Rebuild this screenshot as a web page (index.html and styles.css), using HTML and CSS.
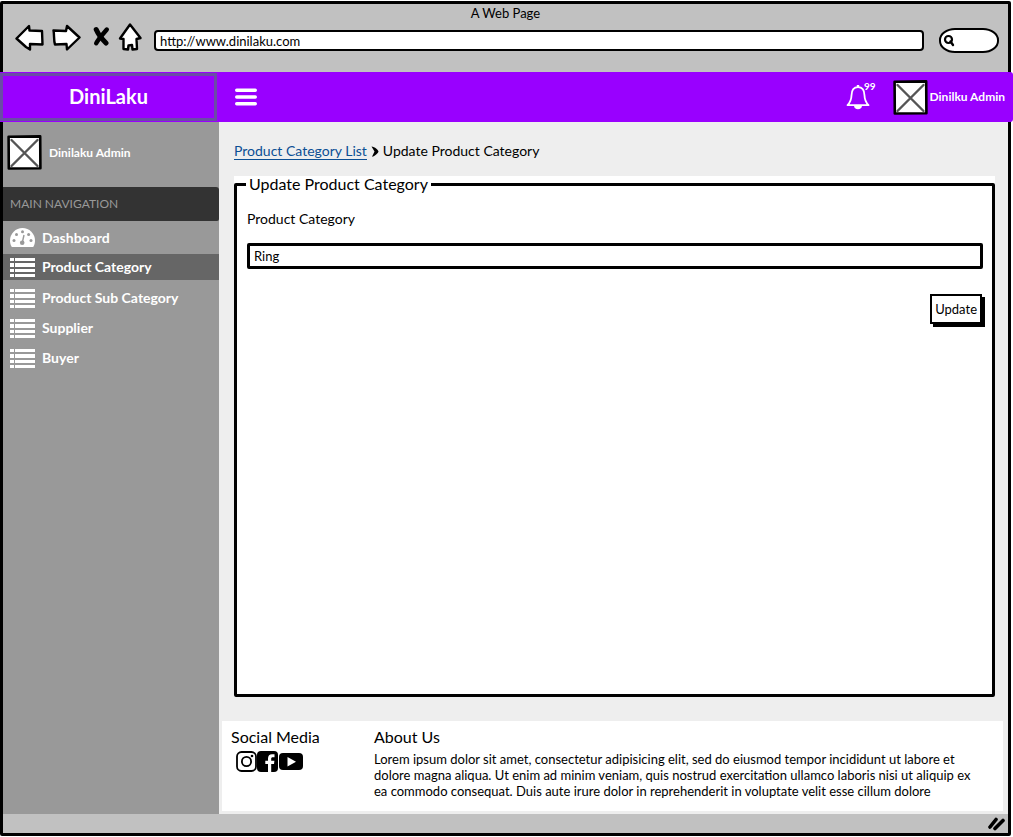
FILE: index.html
```html
<!DOCTYPE html>
<html lang="en">
<head>
<meta charset="utf-8">
<title>A Web Page</title>
<link rel="stylesheet" href="styles.css">
</head>
<body>
<svg class="sprite" aria-hidden="true">
  <symbol id="list" viewBox="0 0 25 19">
    <path fill="#fff" d="M0 0h4v3H0zM5 0h20v3H5zM0 5h4v4H0zM5 5h20v4H5zM0 11h4v3H0zM5 11h20v3H5zM0 16h4v3H0zM5 16h20v3H5z"/>
  </symbol>
  <symbol id="avatar" viewBox="0 0 35 35">
    <path fill="#fff" stroke="#000" stroke-width="2.6" stroke-linejoin="round" d="M1.6 1.8 33.2 1.4 33.4 33.2 1.8 33.5z"/>
    <path fill="none" stroke="#555" stroke-width="2.4" stroke-linecap="round" d="M4.5 5 30.5 31M30.5 5 4.5 31"/>
  </symbol>
</svg>
<div class="window">
  <div class="chrome">
    <div class="window-title">A Web Page</div>
    <div class="toolbar">
      <div class="tools">
        <button class="icon-btn" type="button" aria-label="Back"><svg width="29" height="27" viewBox="0 0 29 27"><path class="ink" d="M1.5 14.5 14 2l.5 4.5L27 7l.5 13.500-12.500-.5v5.500L11 23z"/></svg></button>
        <button class="icon-btn" type="button" aria-label="Forward"><svg width="29" height="27" viewBox="0 0 29 27"><path class="ink" d="M1.500 6.500 14 7l1-5 12.500 11.500L15 25.500 14.500 20 3 20.500C1.500 16 2.500 11 1.500 6.500z"/></svg></button>
        <button class="icon-btn stop" type="button" aria-label="Stop"><svg width="17" height="21" viewBox="0 0 17 21"><path fill="none" stroke="#000" stroke-width="5" stroke-linecap="round" d="M3.200 3.500C6 10 9 13 13 17"/><path fill="none" stroke="#000" stroke-width="4.400" stroke-linecap="round" d="M13.800 3.500C10 8 6 12 3.200 17.200"/></svg></button>
        <button class="icon-btn" type="button" aria-label="Home"><svg width="24" height="28" viewBox="0 0 24 28"><path class="ink" d="M12 1.500 22.500 15l-4 1 .5 10-4.500.5-.5-4.500-3.500.5-.5 4-4.500-.5V16l-3.500-.5z"/></svg></button>
      </div>
      <input class="address" type="text" aria-label="Address" value="http://www.dinilaku.com">
      <label class="search">
        <svg width="13" height="13" viewBox="0 0 13 13" aria-hidden="true"><circle cx="5.500" cy="5.500" r="3.500" fill="none" stroke="#000" stroke-width="2.200"/><path stroke="#000" stroke-width="2.400" stroke-linecap="round" d="M7.500 7.500 10 11"/></svg>
        <input type="search" aria-label="Search">
      </label>
    </div>
  </div>

  <header class="topbar">
    <a class="brand" href="#">DiniLaku</a>
    <button class="icon-btn menu" type="button" aria-label="Menu"><svg width="22" height="18" viewBox="0 0 22 18"><path stroke="#fff" stroke-width="3.400" stroke-linecap="round" d="M1.700 2.200h18.600M1.700 9h18.600M1.700 15.800h18.600"/></svg></button>
    <button class="icon-btn bell" type="button" aria-label="Notifications">
      <svg width="24" height="26" viewBox="0 0 24 26"><path fill="none" stroke="#fff" stroke-width="1.800" stroke-linejoin="round" d="M12 3.200C7.500 3.200 5.600 7 5.500 11.500 5.400 16 4.500 18 1.500 21.200h21C19.500 18 18.600 16 18.500 11.500 18.400 7 16.500 3.200 12 3.200z"/><path fill="#fff" d="M10.800 1h2.400v2.500h-2.400zM8 21.500h8c0 2.500-1.700 3.800-4 3.800s-4-1.300-4-3.800z"/></svg>
      <span class="badge">99</span>
    </button>
    <a class="account" href="#"><svg width="35" height="35" aria-hidden="true"><use href="#avatar"/></svg>Dinilku Admin</a>
  </header>

  <div class="body">
    <aside class="sidebar">
      <div class="profile"><svg width="35" height="35" aria-hidden="true"><use href="#avatar"/></svg>Dinilaku Admin</div>
      <h2 class="nav-title">MAIN NAVIGATION</h2>
      <nav>
        <a class="nav-link" href="#"><svg width="25" height="19" viewBox="0 0 25 19" aria-hidden="true"><path fill="#fff" d="M1.800 19C.5 17 0 15 0 12.500a12.500 12.500 0 0 1 25 0c0 2.500-.5 4.500-1.800 6.500z"/><g fill="#999"><circle cx="12.500" cy="3.800" r="1.500"/><circle cx="6.500" cy="6.500" r="1.500"/><circle cx="18.600" cy="6.500" r="1.500"/><circle cx="4" cy="12.500" r="1.500"/><circle cx="21" cy="12.500" r="1.500"/><circle cx="12.200" cy="14.800" r="2.300"/></g><path stroke="#999" stroke-width="1.400" d="M12.300 14.500 14 7"/></svg>Dashboard</a>
        <a class="nav-link active" href="#" aria-current="page"><svg width="25" height="19" aria-hidden="true"><use href="#list"/></svg>Product Category</a>
        <a class="nav-link" href="#"><svg width="25" height="19" aria-hidden="true"><use href="#list"/></svg>Product Sub Category</a>
        <a class="nav-link" href="#"><svg width="25" height="19" aria-hidden="true"><use href="#list"/></svg>Supplier</a>
        <a class="nav-link" href="#"><svg width="25" height="19" aria-hidden="true"><use href="#list"/></svg>Buyer</a>
      </nav>
    </aside>

    <div class="content">
      <main class="main">
        <nav class="breadcrumb" aria-label="Breadcrumb">
          <a href="#">Product Category List</a>
          <svg width="8" height="11" viewBox="0 0 8 11" aria-hidden="true"><path d="M.5.5C4 1 7 3.500 7.500 5.500 7 7.500 4 10 1 10.800L3.500 5.500z"/></svg>
          <span>Update Product Category</span>
        </nav>
        <form class="panel">
          <fieldset class="group">
            <legend>Update Product Category</legend>
            <label for="category">Product Category</label>
            <input class="field" id="category" type="text" value="Ring">
            <button class="update" type="button">Update</button>
          </fieldset>
        </form>
      </main>
      <footer class="footer">
        <section class="social">
          <h2>Social Media</h2>
          <div class="social-links">
            <a href="#" aria-label="Instagram"><svg width="21" height="21" viewBox="0 0 21 21"><g fill="none" stroke="#000" stroke-width="1.800"><rect x="1" y="1" width="19" height="19" rx="4.500"/><circle cx="10.500" cy="10.500" r="4.600"/></g><circle cx="16" cy="5" r="1.300"/></svg></a>
            <a href="#" aria-label="Facebook"><svg width="21" height="21" viewBox="0 0 21 21"><rect width="21" height="21" rx="4"/><path fill="#fff" d="M11 21v-8H8.300V9.800H11V7.500C11 4.800 12.500 3.300 15 3.300h2.500v3h-1.700c-1.200 0-1.600.5-1.600 1.500v2h3.200L17 13h-2.800v8z"/></svg></a>
            <a href="#" aria-label="YouTube"><svg width="25" height="21" viewBox="0 0 25 21"><rect x="1" y="2" width="24" height="17" rx="4"/><path fill="#fff" d="M9.500 6v9.500l8.500-4.700z"/></svg></a>
          </div>
        </section>
        <section class="about">
          <h2>About Us</h2>
          <p>Lorem ipsum dolor sit amet, consectetur adipisicing elit, sed do eiusmod tempor incididunt ut labore et dolore magna aliqua. Ut enim ad minim veniam, quis nostrud exercitation ullamco laboris nisi ut aliquip ex ea commodo consequat. Duis aute irure dolor in reprehenderit in voluptate velit esse cillum dolore</p>
        </section>
      </footer>
    </div>
  </div>
  <div class="statusbar"><svg width="17" height="14" viewBox="0 0 17 14" aria-hidden="true"><path fill="none" stroke="#000" stroke-width="3.600" stroke-linecap="round" d="M2 10 8 2.500M7 11.500 15 3.500"/></svg></div>
</div>
</body>
</html>
```
FILE: styles.css
```css
* { box-sizing: border-box; }
body {
  margin: 0;
  padding: 1px 2px 1px 0;
  min-height: 100vh;
  display: flex;
  background: #fff;
  color: #000;
  font: 13px/16px Lato, "Open Sans", sans-serif;
}
svg { display: block; flex: none; }
h2, p { margin: 0; font-weight: 400; }
a { color: inherit; text-decoration: none; }
input, button { font: inherit; color: inherit; }
.sprite { position: absolute; width: 0; height: 0; }
.icon-btn { padding: 0; border: 0; background: none; }
.ink { fill: #fff; stroke: #000; stroke-width: 2.4; stroke-linejoin: round; }

.window {
  flex: 1;
  min-width: 0;
  display: flex;
  flex-direction: column;
  border: 3px solid #000;
  border-radius: 2px;
  background: #eee;
}

.chrome { height: 68px; background: #c1c1c1; }
.window-title { padding-top: 1px; text-align: center; }
.toolbar { display: flex; align-items: center; padding: 0 9px 0 12px; }
.tools { display: flex; align-items: center; gap: 8px; margin-right: 12px; }
.stop { margin: 0 0 2px 4px; }
.address {
  flex: 1;
  min-width: 0;
  height: 21px;
  margin-top: 7px;
  padding: 0 4px;
  border: 2px solid #000;
  border-radius: 4px;
  background: #fff;
}
.search {
  display: flex;
  align-items: center;
  width: 60px;
  height: 25px;
  margin: 7px 0 0 15px;
  padding: 0 8px 0 2px;
  border: 2px solid #000;
  border-radius: 16px / 12px;
  background: #fff;
}
.search input { width: 100%; min-width: 0; padding: 0; border: 0; outline: 0; background: none; }

.topbar {
  display: flex;
  align-items: center;
  height: 50px;
  margin: 0 -5px 0 -3px;
  padding-right: 8px;
  border-radius: 0 3px 3px 0;
  background: #90f;
  color: #fff;
  font-weight: 700;
  font-size: 12px;
}
.brand {
  width: 217px;
  height: 48px;
  border: 3px solid #6b4ba6;
  font-size: 20px;
  line-height: 40px;
  text-align: center;
}
.menu { margin-left: 18px; }
.bell { display: flex; align-items: center; margin-left: auto; }
.badge { align-self: flex-start; margin-top: -4px; margin-left: -6px; font-size: 10px; line-height: 12px; }
.account { display: flex; align-items: center; gap: 2px; margin-left: 17px; }

.body { flex: 1; display: flex; }
.sidebar { width: 216px; flex: none; background: #999; color: #fff; font-weight: 700; }
.profile { display: flex; align-items: center; gap: 7px; height: 65px; padding: 0 4px 4px; font-size: 12px; }
.nav-title {
  height: 34px;
  padding-left: 7px;
  border-radius: 0 3px 2px 0;
  background: #333;
  color: #999;
  font-size: 12px;
  font-weight: 400;
  line-height: 34px;
}
.nav-link { display: flex; align-items: center; gap: 7px; height: 30px; padding-left: 7px; font-size: 14px; }
.nav-link:first-child { height: 33px; }
.nav-link.active { height: 26px; margin-bottom: 3px; background: #666; }

.content { flex: 1; min-width: 0; display: flex; flex-direction: column; }
.main { flex: 1; display: flex; flex-direction: column; padding: 21px 13px 24px 15px; }
.breadcrumb { display: flex; align-items: center; gap: 4px; height: 16px; margin-bottom: 17px; font-size: 14px; }
.breadcrumb a { border-bottom: 1px solid #0b4f94; color: #0b4f94; }
.panel { flex: 1; display: flex; background: #fff; }
.group {
  flex: 1;
  min-width: 0;
  margin: 0;
  padding: 17px 9px 0 10px;
  border: 3px solid #000;
  border-radius: 2px;
}
.group legend { margin-left: -1px; padding: 0 3px; font-size: 16px; line-height: 16px; }
.group label { display: block; margin-top: 2px; font-size: 14px; }
.field {
  display: block;
  width: 100%;
  height: 26px;
  margin-top: 16px;
  padding: 0 4px;
  border: 3px solid #000;
  border-radius: 2px;
  background: #fff;
}
.update {
  display: block;
  height: 30px;
  margin: 25px 1px 0 auto;
  padding: 0 3px;
  border: 2px solid #000;
  background: #fff;
  box-shadow: 3px 3px 0 #000;
}

.footer { display: flex; margin: 0 5px 3px 3px; padding: 7px 10px 12px 9px; background: #fff; }
.footer h2 { font-size: 16px; line-height: 18px; }
.social { width: 143px; flex: none; }
.social-links { display: flex; padding: 5px 0 0 5px; }
.about { flex: 1; min-width: 0; }
.about p { padding: 5px 8px 0 0; }

.statusbar { display: flex; justify-content: flex-end; height: 19px; padding: 3px 3px 0 0; background: #c1c1c1; }
```
